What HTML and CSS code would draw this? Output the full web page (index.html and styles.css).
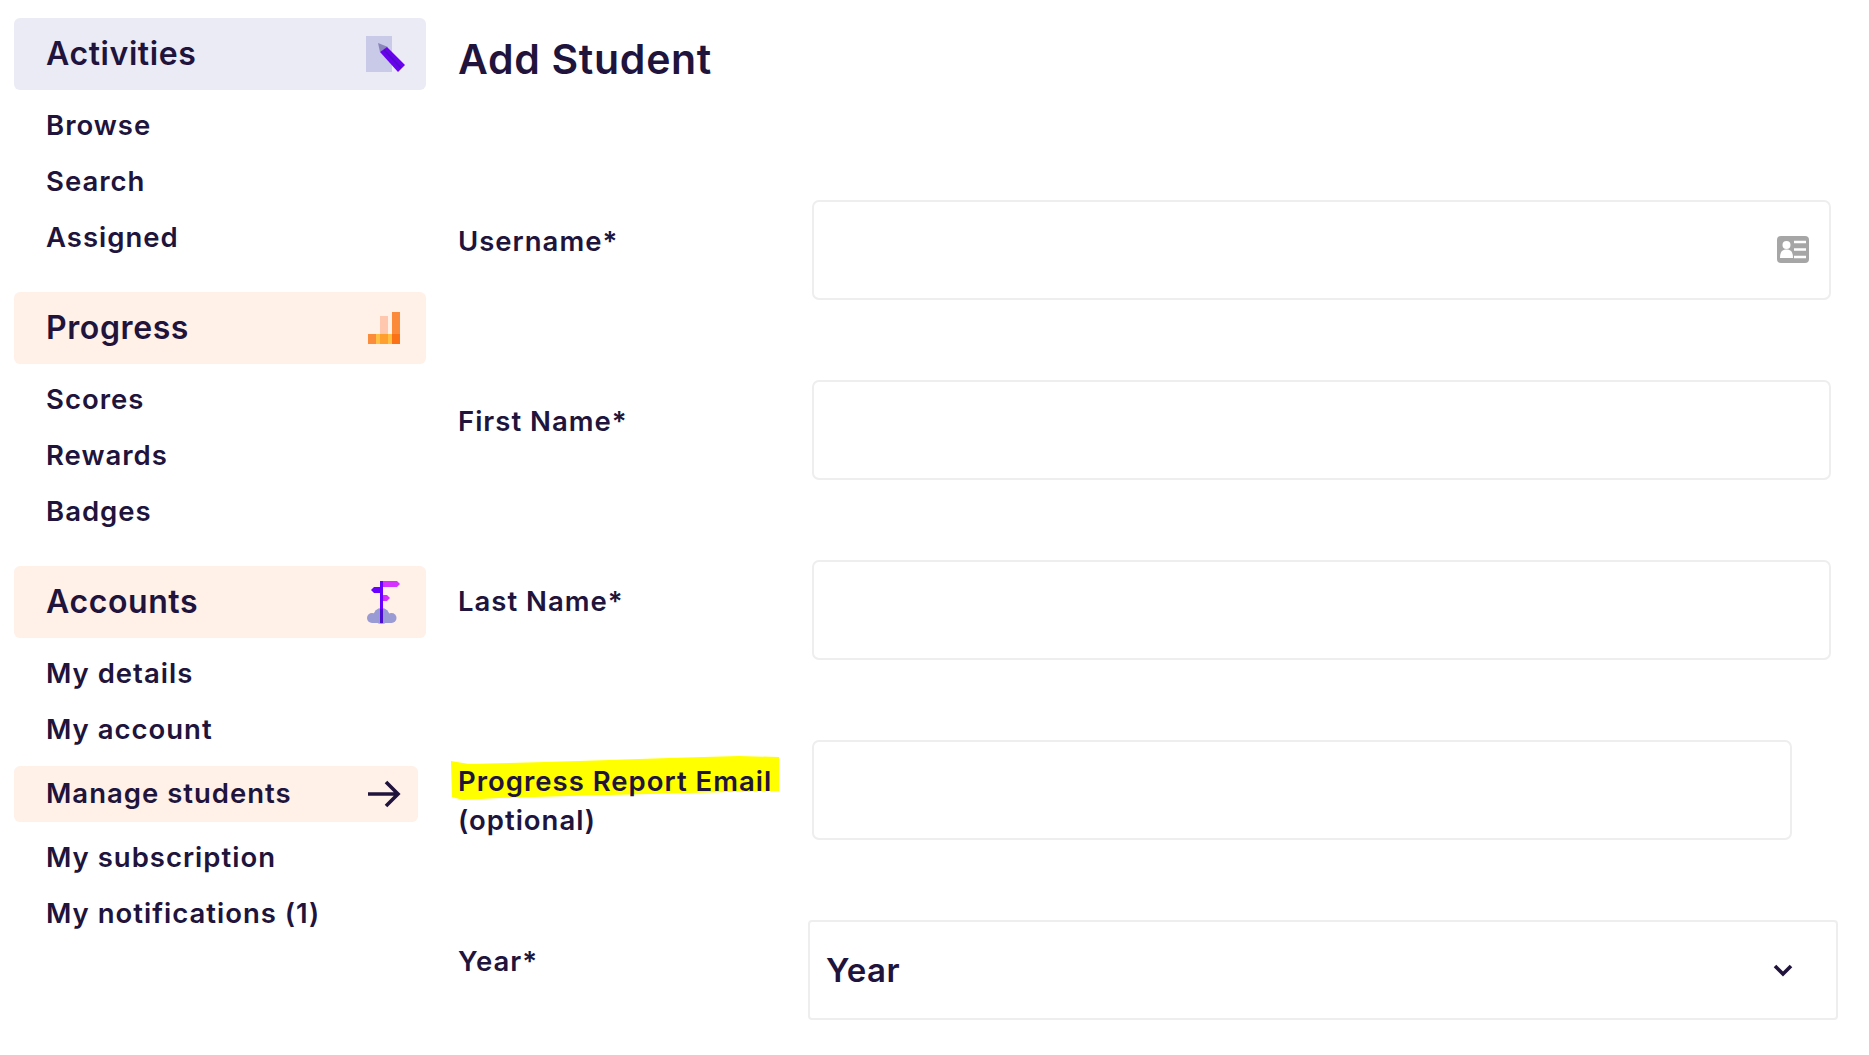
FILE: index.html
```html
<!DOCTYPE html>
<html lang="en">
<head>
<meta charset="UTF-8" />
<meta name="viewport" content="width=device-width, initial-scale=1" />
<title>Add Student</title>
<link rel="stylesheet" href="styles.css">
</head>
<body>

<aside class="sidebar">
  <div class="nav-head nav-head-blue">
    <span>Activities</span>
    <svg class="head-icon" width="40" height="40" viewBox="0 -2 40 40">
      <rect x="0" y="0" width="26" height="36" fill="#c9c9e8" />
      <polygon points="12,7 22,11 14,16" fill="#8a86bb" />
      <polygon points="21,11 39,29 32,36 14,16" fill="#6a00f0" />
      <path d="M18 14 L35 32" stroke="#4a10c0" stroke-width="1.5" />
    </svg>
  </div>
  <ul class="nav-list">
    <li>Browse</li>
    <li>Search</li>
    <li>Assigned</li>
  </ul>

  <div class="nav-head nav-head-peach">
    <span>Progress</span>
    <svg class="head-icon" width="40" height="40" viewBox="0 0 40 40">
      <rect x="14" y="8" width="8" height="18" fill="#ffc7ad" />
      <rect x="26" y="4" width="8" height="22" fill="#fb8a3a" />
      <rect x="2" y="26" width="32" height="10" fill="#ffc044" />
      <rect x="2" y="26" width="8" height="10" fill="#fa8c3c" />
      <rect x="14" y="26" width="8" height="10" fill="#ff9f2f" />
      <rect x="26" y="26" width="8" height="10" fill="#fb7216" />
    </svg>
  </div>
  <ul class="nav-list">
    <li>Scores</li>
    <li>Rewards</li>
    <li>Badges</li>
  </ul>

  <div class="nav-head nav-head-peach">
    <span>Accounts</span>
    <svg class="head-icon" width="40" height="44" viewBox="-1 -1 40 44">
      <g fill="#9a9ad4">
        <circle cx="5" cy="37" r="5" />
        <circle cx="24.500" cy="37" r="5" />
        <circle cx="14.500" cy="35" r="8" />
        <rect x="5" y="33" width="19.500" height="9" />
      </g>
      <polygon points="16,0 30,0 33,3 30,6 16,6" fill="#d632ff" />
      <polygon points="13,6 7,6 4,9 7,12 13,12" fill="#6a00ff" />
      <polygon points="16,14 20,14 23,17 20,20 16,20" fill="#d632ff" />
      <rect x="13" y="0" width="3" height="42" fill="#6a00ff" />
      <rect x="13" y="28" width="3" height="14" fill="#4a0cd0" />
    </svg>
  </div>
  <ul class="nav-list nav-list-accounts">
    <li>My details</li>
    <li>My account</li>
    <li class="current">
      <span>Manage students</span>
      <svg class="arrow" width="34" height="28" viewBox="0 0 34 28">
        <path d="M1 14 H31 M19 2 L31 14 L19 26" fill="none" stroke="#21143c" stroke-width="3.600" />
      </svg>
    </li>
    <li>My subscription</li>
    <li>My notifications (1)</li>
  </ul>
</aside>

<main>
  <h1>Add Student</h1>

  <div class="form-row">
    <label>Username*</label>
    <div class="field">
      <input type="text" />
      <svg class="field-icon" width="32" height="27" viewBox="0 0 32 27">
        <rect width="32" height="27" rx="4" fill="#a6a6a6" />
        <circle cx="9.5" cy="9" r="4" fill="#fff" />
        <path d="M3 22 C3 15 6 13.500 9.500 13.500 C13 13.500 16 15 16 22 z" fill="#fff" />
        <path d="M17 6 H29 M17 13.500 H29 M17 21 H29" stroke="#fff" stroke-width="2.500" />
      </svg>
    </div>
  </div>

  <div class="form-row">
    <label>First Name*</label>
    <div class="field"><input type="text" /></div>
  </div>

  <div class="form-row">
    <label>Last Name*</label>
    <div class="field"><input type="text" /></div>
  </div>

  <div class="form-row">
    <label class="label-marked">
      <svg class="marker" width="332" height="46" viewBox="0 0 332 46">
        <polygon points="2,5 20,8 60,7 130,5 220,2 290,0 330,1 330,35 280,36 200,38 120,40 50,42 14,44 3,41" fill="#ffff00" />
      </svg>
      <span class="marked-text">Progress Report Email</span><br>(optional)
    </label>
    <div class="field field-short"><input type="text" /></div>
  </div>

  <div class="form-row">
    <label>Year*</label>
    <div class="field field-select">
      <select>
        <option>Year</option>
      </select>
      <svg class="field-icon chevron" width="20" height="13" viewBox="0 0 20 13">
        <path d="M2 2 L10 10 L18 2" fill="none" stroke="#21143c" stroke-width="3.600" />
      </svg>
    </div>
  </div>
</main>

</body>
</html>
```

FILE: styles.css
```css
body {
  margin: 0;
  display: flex;
  align-items: flex-start;
  font-family: Inter, "Open Sans", sans-serif;
  font-weight: 600;
  font-size: 27.5px;
  letter-spacing: 1px;
  color: #21143c;
  background: #fff;
}
.sidebar {
  width: 412px;
  margin: 18px 0 0 14px;
  flex-shrink: 0;
}
.nav-head {
  display: flex;
  justify-content: space-between;
  align-items: center;
  height: 72px;
  padding: 0 20px 2px 32px;
  border-radius: 6px;
  font-size: 32px;
  font-weight: 600;
  letter-spacing: 0.6px;
  box-sizing: border-box;
}
.nav-head-blue {
  background: #ebebf6;
}
.nav-head-peach {
  background: #fff0e8;
}
.head-icon {
  flex-shrink: 0;
  margin-top: 2px;
}
.nav-list {
  list-style: none;
  margin: 0;
  padding: 7px 0 27px;
}
.nav-list li {
  display: flex;
  justify-content: space-between;
  align-items: center;
  height: 56px;
  padding: 0 17px 0 32px;
}
.nav-list li.current {
  width: 404px;
  margin: 9px 0 7px;
  padding-bottom: 2px;
  box-sizing: border-box;
  background: #fff0e8;
  border-radius: 6px;
}
.arrow {
  margin-top: 2px;
}
main {
  margin-left: 32px;
  flex: 1;
}
h1 {
  margin: 29px 0 111px;
  font-size: 41px;
  line-height: 60px;
  font-weight: 600;
  letter-spacing: 0.7px;
}
.form-row {
  display: flex;
  margin-bottom: 80px;
}
.form-row label {
  width: 354px;
  flex-shrink: 0;
  padding-top: 22px;
  line-height: 39px;
}
.label-marked {
  position: relative;
}
.marker {
  position: absolute;
  left: -9px;
  top: 16px;
}
.marked-text {
  position: relative;
}
.field {
  position: relative;
  width: 1019px;
  height: 100px;
}
.field-short {
  width: 980px;
}
.field-select {
  width: 1030px;
  margin-left: -4px;
}
.field input,
.field select {
  display: block;
  width: 100%;
  height: 100%;
  box-sizing: border-box;
  border: 2px solid #eeeeee;
  border-radius: 7px;
  background: #fff;
  outline: none;
  font-family: inherit;
  color: inherit;
}
.field select {
  appearance: none;
  padding-left: 16px;
  border-radius: 4px;
  font-size: 33px;
  font-weight: 600;
  letter-spacing: 0.5px;
}
.field-icon {
  position: absolute;
  right: 22px;
  top: 36px;
  pointer-events: none;
}
.chevron {
  right: 45px;
  top: 44px;
}
```
